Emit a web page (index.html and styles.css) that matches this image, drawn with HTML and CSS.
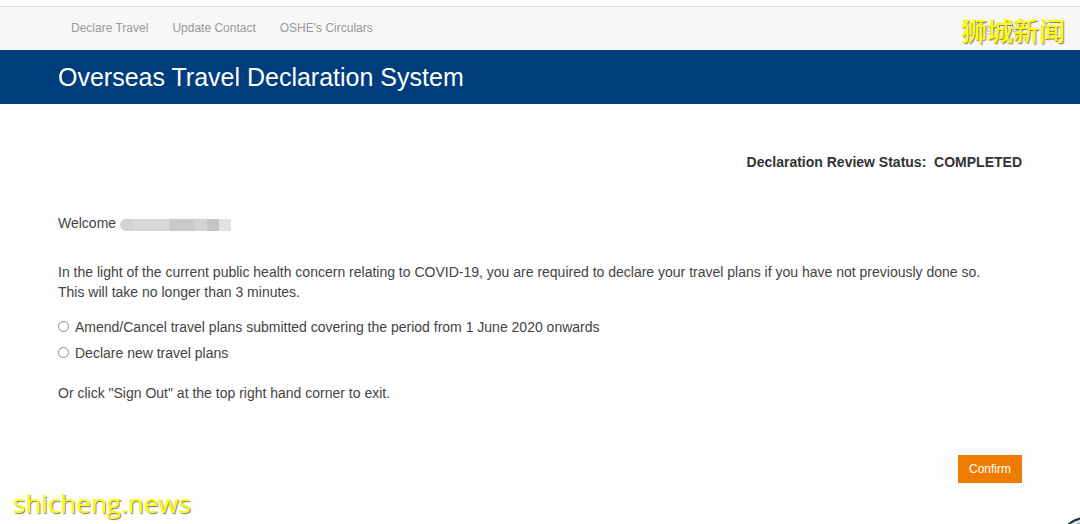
FILE: index.html
```html
<!doctype html>
<html lang="en">
  <head>
    <meta charset="utf-8">
    <meta name="viewport" content="width=device-width, initial-scale=1">
    <title>Overseas Travel Declaration System</title>
    <link rel="stylesheet" href="styles.css">
  </head>
  <body>
    <nav class="navbar">
      <a href="#">Declare Travel</a>
      <a href="#">Update Contact</a>
      <a href="#">OSHE's Circulars</a>
      <a href="#" class="sign-out">Sign Out</a>
    </nav>

    <header class="banner">
      <h1>Overseas Travel Declaration System</h1>
    </header>

    <main class="content">
      <p class="status">Declaration Review Status:&nbsp; COMPLETED</p>

      <p class="welcome">Welcome <span class="masked-name"></span></p>

      <p class="intro">In the light of the current public health concern relating to COVID-19, you are required to declare your travel plans if you have not previously done so.<br>This will take no longer than 3 minutes.</p>

      <form class="travel-form">
        <div class="option">
          <input type="radio" name="travel" id="amend">
          <label for="amend">Amend/Cancel travel plans submitted covering the period from 1 June 2020 onwards</label>
        </div>
        <div class="option">
          <input type="radio" name="travel" id="declare">
          <label for="declare">Declare new travel plans</label>
        </div>

        <p class="exit-note">Or click "Sign Out" at the top right hand corner to exit.</p>

        <div class="actions">
          <button type="button" class="btn-confirm">Confirm</button>
        </div>
      </form>
    </main>

    <!-- Watermarks -->
    <div class="watermark watermark-top" lang="zh">狮城新闻</div>
    <div class="watermark watermark-bottom">shicheng.news</div>

    <svg class="corner-ring" width="20" height="8" viewBox="0 0 20 8" aria-hidden="true">
      <circle cx="26" cy="29" r="27" fill="#e4eeee" stroke="#26383b" stroke-width="2"/>
      <circle cx="26" cy="29" r="23" fill="none" stroke="#8fa3a5" stroke-width="1"/>
    </svg>
  </body>
</html>
```

FILE: styles.css
```css
/* Reset */
* {
  margin: 0;
  padding: 0;
  box-sizing: border-box;
}

body {
  position: relative;
  min-height: 100vh;
  padding-top: 6px;
  overflow-x: hidden;
  background-color: #fefefe;
  color: #444;
  font-family: "Liberation Sans", Arial, sans-serif;
  font-size: 14px;
  line-height: 20px;
}

/* Top navigation */
.navbar {
  display: flex;
  align-items: center;
  gap: 24px;
  height: 44px;
  padding: 0 58px 2px 71px;
  border-top: 1px solid #e4e4e4;
  background-color: #f7f7f7;
}

.navbar a {
  color: #999;
  font-size: 12px;
  text-decoration: none;
}

.navbar .sign-out {
  margin-left: auto;
  color: #bbb;
}

/* Blue title bar */
.banner {
  padding: 11px 58px;
  background-color: #003d7c;
}

.banner h1 {
  color: #fff;
  font-size: 25px;
  font-weight: normal;
  line-height: 32px;
}

/* Page content */
.content {
  padding: 48px 58px 40px;
}

.status {
  color: #333;
  font-weight: bold;
  text-align: right;
}

.welcome {
  display: flex;
  align-items: center;
  gap: 4px;
  margin-top: 41px;
}

.masked-name {
  width: 111px;
  height: 12px;
  margin-top: 3px;
  border-radius: 6px 0 0 6px;
  background: linear-gradient(90deg, #d3d3d3 0 12%, #d9d9d9 12% 44%, #c9c9c9 44% 67%, #d3d3d3 67% 78%, #c5c5c5 78% 89%, #e2e2e2 89%);
}

.intro {
  margin-top: 29px;
}

/* Travel options */
.travel-form {
  margin-top: 15px;
}

.option {
  display: flex;
  align-items: center;
  gap: 6px;
  margin-bottom: 6px;
}

.option input {
  appearance: none;
  width: 11px;
  height: 11px;
  margin-bottom: 2px;
  border: 1px solid #8a8a8a;
  border-radius: 50%;
  background-color: #fff;
}

.option input:checked {
  border: 4px solid #003d7c;
}

.exit-note {
  margin-top: 20px;
}

.actions {
  display: flex;
  justify-content: flex-end;
  margin-top: 52px;
}

.btn-confirm {
  padding: 4px 11px;
  border: none;
  background-color: #ef7c00;
  color: #fff;
  font-family: inherit;
  font-size: 12px;
  line-height: 20px;
  cursor: pointer;
}

/* Watermarks lie over the page */
.watermark {
  position: absolute;
  color: #ff0;
  text-shadow: 1px 1px 1px #777;
  pointer-events: none;
}

.watermark-top {
  top: 14px;
  right: 15px;
  font-family: "Noto Sans CJK SC", sans-serif;
  font-size: 26px;
  font-weight: 500;
  line-height: 32px;
}

.watermark-bottom {
  bottom: 5px;
  left: 13px;
  font-family: "Open Sans", sans-serif;
  font-size: 26px;
  line-height: 32px;
}

.corner-ring {
  position: absolute;
  right: 0;
  bottom: 0;
}
```
